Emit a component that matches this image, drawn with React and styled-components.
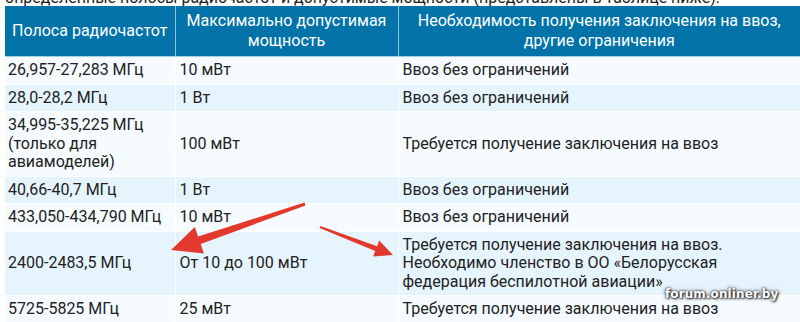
import React from "react";
import styled, { createGlobalStyle } from "styled-components";

const GlobalStyle = createGlobalStyle`
  html, body {
    margin: 0;
    padding: 0;
    background: #fff;
    overflow: hidden;
  }
  body {
    font-family: Roboto, "Liberation Sans", Arial, sans-serif;
    color: #222;
  }
`;

const Page = styled.div`
  position: relative;
  width: 800px;
  height: 322px;
  overflow: hidden;
  padding-left: 5px;
  box-sizing: border-box;
`;

const Intro = styled.p`
  margin: -10px 0 0;
  font-size: 16px;
  line-height: 16px;
  white-space: nowrap;
  color: #222;
`;

const Table = styled.table`
  border-collapse: collapse;
  width: 795px;
  table-layout: fixed;
  font-size: 16px;
  line-height: 18.5px;
`;

const HeadCell = styled.th`
  background: #0273a9;
  color: #fff;
  font-weight: 400;
  text-align: center;
  vertical-align: middle;
  padding: 5px 4px;
  line-height: 20px;
  border-left: 1px solid #8fc3dd;
  border-bottom: 1px solid #9fd0e8;
  &:first-child {
    border-left: none;
  }
`;

const Row = styled.tr`
  background: ${(p) => (p.$alt ? "#e6f5fd" : "#f5fbff")};
`;

const Cell = styled.td`
  padding: 4px 4px;
  vertical-align: middle;
  border-left: 1px solid #fff;
  border-top: 1px solid #fff;
  &:first-child {
    border-left: none;
    padding-left: 3px;
  }
`;

const Overlay = styled.svg`
  position: absolute;
  left: 0;
  top: 0;
  pointer-events: none;
`;

const Watermark = styled.div`
  position: absolute;
  left: 665px;
  top: 287px;
  font-family: "DejaVu Sans", Verdana, sans-serif;
  font-weight: 700;
  font-size: 12px;
  letter-spacing: 0.1px;
  color: #fff;
  text-shadow: 0 0 2px rgba(0, 0, 0, 0.9), 0 0 4px rgba(0, 0, 0, 0.6),
    1px 1px 2px rgba(0, 0, 0, 0.7);
`;

const rows = [
  ["26,957-27,283 МГц", "10 мВт", "Ввоз без ограничений"],
  ["28,0-28,2 МГц", "1 Вт", "Ввоз без ограничений"],
  [
    <>
      34,995-35,225 МГц
      <br />
      (только для
      <br />
      авиамоделей)
    </>,
    "100 мВт",
    "Требуется получение заключения на ввоз",
  ],
  ["40,66-40,7 МГц", "1 Вт", "Ввоз без ограничений"],
  ["433,050-434,790 МГц", "10 мВт", "Ввоз без ограничений"],
  [
    "2400-2483,5 МГц",
    "От 10 до 100 мВт",
    <>
      Требуется получение заключения на ввоз.
      <br />
      Необходимо членство в ОО «Белорусская
      <br />
      федерация беспилотной авиации»
    </>,
  ],
  ["5725-5825 МГц", "25 мВт", "Требуется получение заключения на ввоз"],
];

// builds a tapered arrow polygon from tail to tip
function arrowPoints(tx, ty, hx, hy, tailW, shaftW, headL, headW) {
  const dx = hx - tx;
  const dy = hy - ty;
  const len = Math.hypot(dx, dy);
  const ux = dx / len;
  const uy = dy / len;
  const nx = -uy;
  const ny = ux;
  const bx = hx - ux * headL;
  const by = hy - uy * headL;
  const pts = [
    [tx + nx * tailW / 2, ty + ny * tailW / 2],
    [bx + nx * shaftW / 2, by + ny * shaftW / 2],
    [bx + nx * headW / 2, by + ny * headW / 2],
    [hx, hy],
    [bx - nx * headW / 2, by - ny * headW / 2],
    [bx - nx * shaftW / 2, by - ny * shaftW / 2],
    [tx - nx * tailW / 2, ty - ny * tailW / 2],
  ];
  return pts.map((p) => p.map((v) => v.toFixed(1)).join(",")).join(" ");
}

export default function App() {
  return (
    <>
      <GlobalStyle />
      <Page>
        <Intro>
          определенные полосы радиочастот и допустимые мощности (представлены в таблице ниже).
        </Intro>
        <Table>
          <colgroup>
            <col style={{ width: 170 }} />
            <col style={{ width: 223 }} />
            <col />
          </colgroup>
          <thead>
            <tr>
              <HeadCell>Полоса радиочастот</HeadCell>
              <HeadCell>
                Максимально допустимая
                <br />
                мощность
              </HeadCell>
              <HeadCell>
                Необходимость получения заключения на ввоз,
                <br />
                другие ограничения
              </HeadCell>
            </tr>
          </thead>
          <tbody>
            {rows.map((r, i) => (
              <Row key={i} $alt={i % 2 === 1}>
                <Cell>{r[0]}</Cell>
                <Cell>{r[1]}</Cell>
                <Cell>{r[2]}</Cell>
              </Row>
            ))}
          </tbody>
        </Table>
        <Overlay width="800" height="322" viewBox="0 0 800 322">
          <polygon
            fill="#e2382d"
            points={arrowPoints(305, 204, 171, 250, 3, 8, 30, 28)}
          />
          <polygon
            fill="#e2382d"
            points={arrowPoints(320, 227, 393, 255, 2, 5, 18, 17)}
          />
        </Overlay>
        <Watermark>forum.onliner.by</Watermark>
      </Page>
    </>
  );
}
